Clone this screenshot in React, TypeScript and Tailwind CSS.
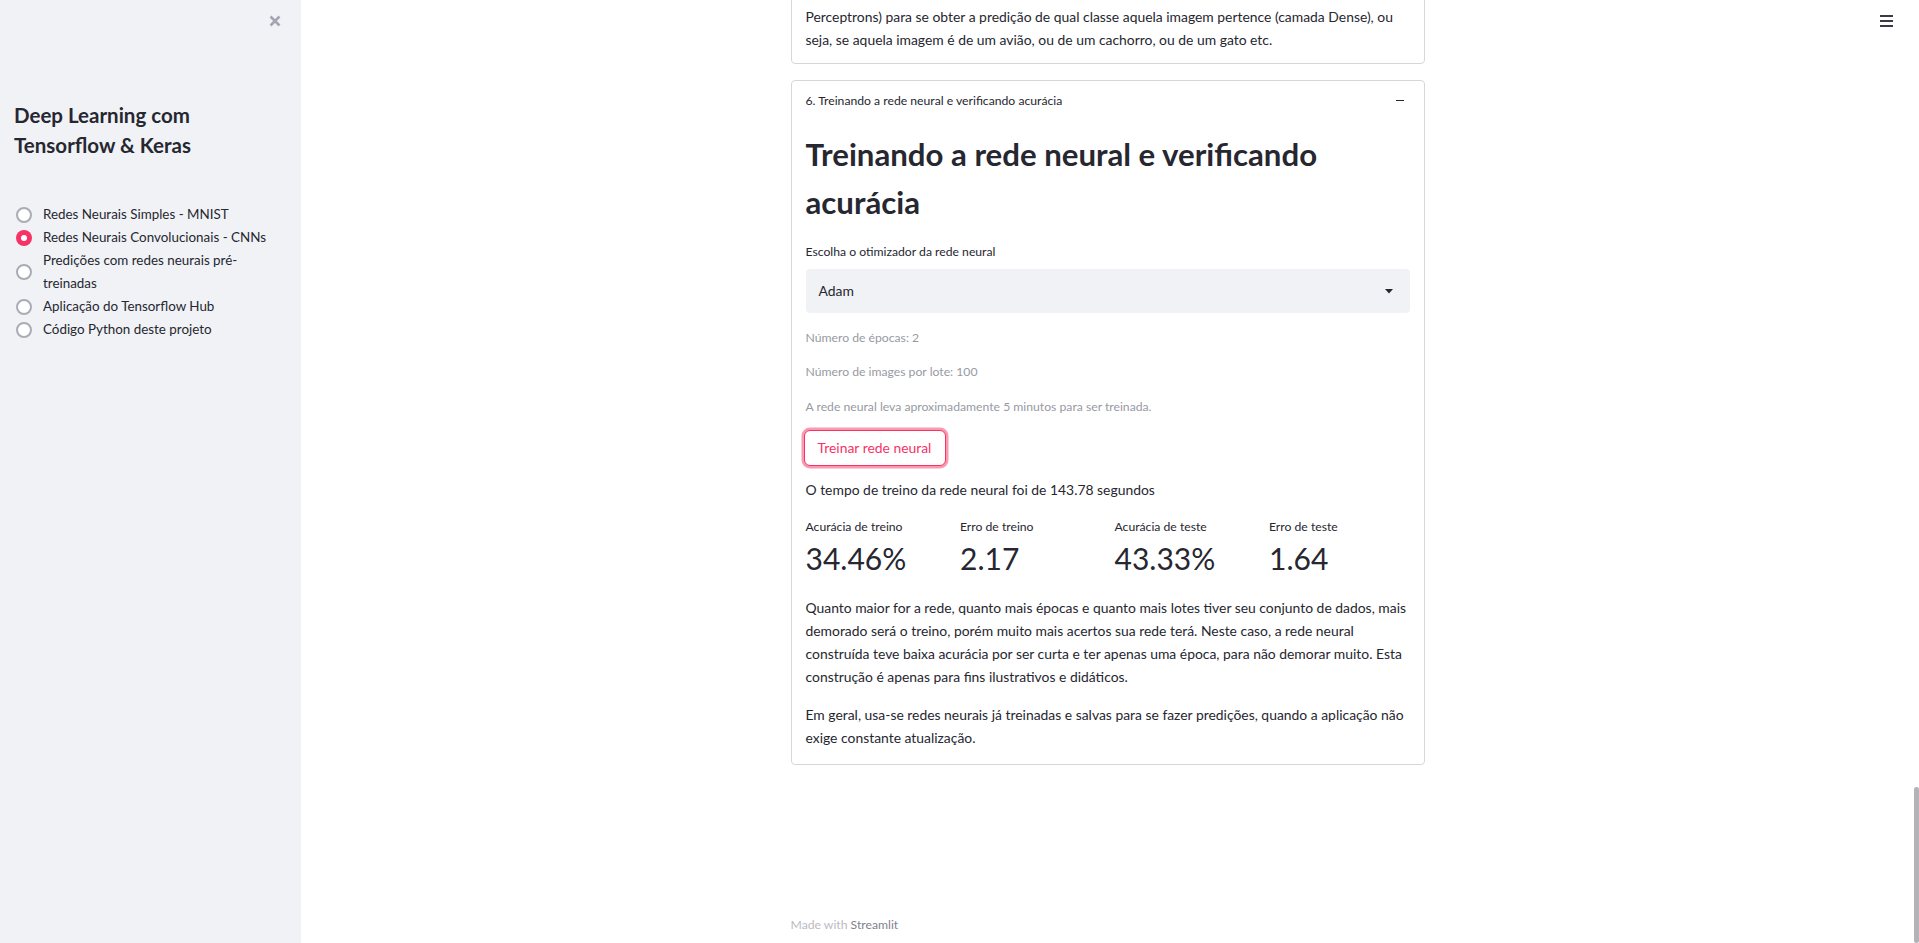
import React from "react";

const F = "font-['Lato','Liberation_Sans',sans-serif]";

function Radio({ selected, lines }: { selected?: boolean; lines: string[] }) {
  return (
    <div className="flex items-center gap-[11px]">
      {selected ? (
        <div className="w-[16px] h-[16px] rounded-full bg-[#f63366] flex items-center justify-center shrink-0">
          <div className="w-[6px] h-[6px] rounded-full bg-white" />
        </div>
      ) : (
        <div className="w-[16px] h-[16px] rounded-full border-2 border-[#a9acb5] bg-white shrink-0" />
      )}
      <div className="text-[13.4px] leading-[23px] text-[#262730]">
        {lines.map((l, i) => (
          <div key={i} className="whitespace-nowrap">{l}</div>
        ))}
      </div>
    </div>
  );
}

function Lines({ lines }: { lines: string[] }) {
  return (
    <>
      {lines.map((l, i) => (
        <div key={i} className="whitespace-nowrap">{l}</div>
      ))}
    </>
  );
}

export default function App() {
  return (
    <div className={`${F} flex h-[943px] w-full overflow-hidden bg-white text-[#262730] relative`}>
      {/* Sidebar */}
      <aside className="w-[301px] shrink-0 bg-[#f0f2f6] h-full flex flex-col">
        <div className="h-[42px] flex items-center justify-end pr-[20px]">
          <svg width="12" height="12" viewBox="0 0 12 12">
            <path d="M1.5 1.5 L10.5 10.5 M10.5 1.5 L1.5 10.5" stroke="#a3a6b0" strokeWidth="2.6" strokeLinecap="butt" />
          </svg>
        </div>
        <div className="mt-[58px] pl-[14px] text-[20.5px] leading-[30px] font-bold text-[#262730]">
          <div>Deep Learning com</div>
          <div>Tensorflow &amp; Keras</div>
        </div>
        <div className="mt-[43px] pl-[16px] flex flex-col">
          <Radio lines={["Redes Neurais Simples - MNIST"]} />
          <Radio selected lines={["Redes Neurais Convolucionais - CNNs"]} />
          <Radio lines={["Predições com redes neurais pré-", "treinadas"]} />
          <Radio lines={["Aplicação do Tensorflow Hub"]} />
          <Radio lines={["Código Python deste projeto"]} />
        </div>
      </aside>

      {/* Main */}
      <main className="flex-1 h-full overflow-hidden pr-[5px]">
        <div className="w-[634px] mx-auto -mt-[30px] flex flex-col gap-[16px]">
          {/* Card 1 (cut off) */}
          <div className="border border-[#d6d7dc] rounded-[4px] px-[14px] pt-[34px] pb-[12px] text-[13.9px] leading-[23px]">
            <Lines
              lines={[
                "Perceptrons) para se obter a predição de qual classe aquela imagem pertence (camada Dense), ou",
                "seja, se aquela imagem é de um avião, ou de um cachorro, ou de um gato etc.",
              ]}
            />
          </div>

          {/* Card 2 */}
          <div className="border border-[#d6d7dc] rounded-[4px] px-[14px] pb-[15px]">
            <div className="h-[39px] flex items-center justify-between">
              <span className="text-[12.2px] leading-[20px]">6. Treinando a rede neural e verificando acurácia</span>
              <div className="w-[8px] h-[1.5px] bg-[#262730] mr-[6px]" />
            </div>
            <h2 className="mt-[10px] text-[31.2px] leading-[48px] font-bold text-[#262730]">
              <div className="whitespace-nowrap">Treinando a rede neural e verificando</div>
              <div>acurácia</div>
            </h2>
            <div className="mt-[16px] text-[12.2px] leading-[20px]">Escolha o otimizador da rede neural</div>
            <div className="mt-[7px] h-[44px] rounded-[4px] bg-[#f0f2f6] flex items-center justify-between pl-[13px] pr-[17px]">
              <span className="text-[13.9px]">Adam</span>
              <svg width="8" height="5" viewBox="0 0 8 5">
                <path d="M0 0 L8 0 L4 4.5 Z" fill="#262730" />
              </svg>
            </div>
            <div className="mt-[15px] text-[12.2px] leading-[20px] text-[#979aa2]">Número de épocas: 2</div>
            <div className="mt-[14px] text-[12.2px] leading-[20px] text-[#979aa2]">Número de images por lote: 100</div>
            <div className="mt-[15px] text-[12.2px] leading-[20px] text-[#979aa2]">
              A rede neural leva aproximadamente 5 minutos para ser treinada.
            </div>
            <div className="mt-[13px] flex">
              <button className="h-[36px] w-[142px] -ml-[2px] rounded-[6px] border border-[#f63366] bg-white text-[#f63366] text-[13.9px] shadow-[0_0_0_2.5px_rgba(246,51,102,0.5)]">
                Treinar rede neural
              </button>
            </div>
            <div className="mt-[12px] text-[13.9px] leading-[23px]">
              O tempo de treino da rede neural foi de 143.78 segundos
            </div>
            <div className="mt-[16px] grid grid-cols-4 gap-x-[14px]">
              {[
                ["Acurácia de treino", "34.46%"],
                ["Erro de treino", "2.17"],
                ["Acurácia de teste", "43.33%"],
                ["Erro de teste", "1.64"],
              ].map(([l, v]) => (
                <div key={l}>
                  <div className="text-[12.2px] leading-[20px]">{l}</div>
                  <div className="mt-[1px] text-[30px] leading-[40px]">{v}</div>
                </div>
              ))}
            </div>
            <div className="mt-[18px] text-[13.9px] leading-[23px]">
              <Lines
                lines={[
                  "Quanto maior for a rede, quanto mais épocas e quanto mais lotes tiver seu conjunto de dados, mais",
                  "demorado será o treino, porém muito mais acertos sua rede terá. Neste caso, a rede neural",
                  "construída teve baixa acurácia por ser curta e ter apenas uma época, para não demorar muito. Esta",
                  "construção é apenas para fins ilustrativos e didáticos.",
                ]}
              />
            </div>
            <div className="mt-[15px] text-[13.9px] leading-[23px]">
              <Lines
                lines={[
                  "Em geral, usa-se redes neurais já treinadas e salvas para se fazer predições, quando a aplicação não",
                  "exige constante atualização.",
                ]}
              />
            </div>
          </div>

          <div className="mt-[134px] text-[12.2px] leading-[20px]">
            <span className="text-[#b9bbc3]">Made with </span>
            <span className="text-[#7f8391]">Streamlit</span>
          </div>
        </div>
      </main>

      {/* Hamburger menu (fixed header overlay) */}
      <div className="absolute top-[15px] right-[26px] flex flex-col gap-[3.5px]">
        <div className="w-[13px] h-[1.6px] bg-[#3a3b46]" />
        <div className="w-[13px] h-[1.6px] bg-[#3a3b46]" />
        <div className="w-[13px] h-[1.6px] bg-[#3a3b46]" />
      </div>

      {/* Scrollbar thumb overlay */}
      <div className="absolute right-0 bottom-0 w-[5px] h-[156px] rounded-[3px] bg-[#b3b3b8]" />
    </div>
  );
}
